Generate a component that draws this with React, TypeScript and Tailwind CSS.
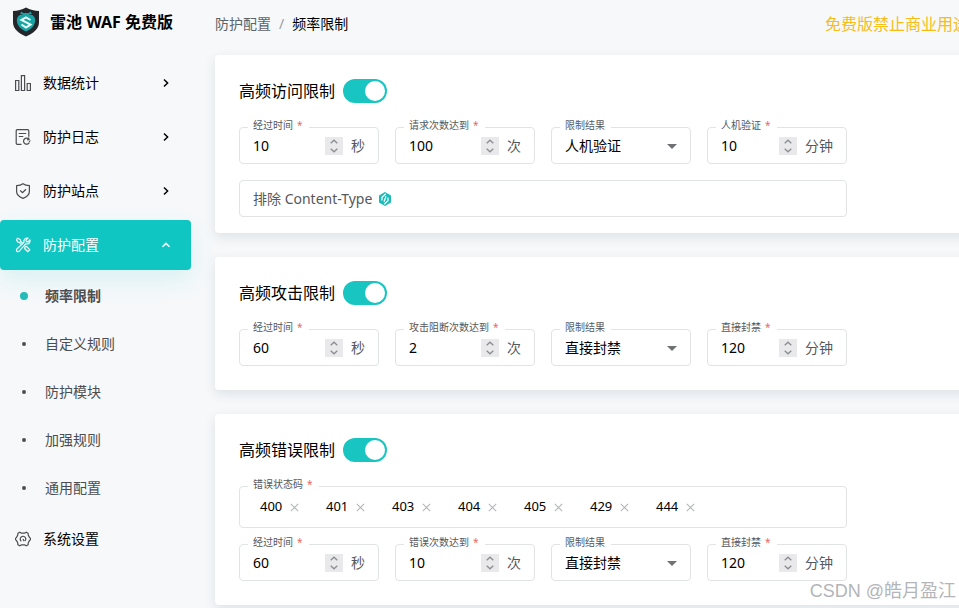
import { useId, type ReactNode } from "react";

function LogoIcon() {
  return (
    <svg width="28" height="30" viewBox="0 0 28 30" aria-hidden="true">
      <path d="M14 .5c4 2.600 8.500 3.200 13 3.500v11.500c0 6.500-6 11-13 14-7-3-13-7.500-13-14V4C5.500 3.700 10 3.100 14 .5z" fill="#23262b" />
      <path d="M14 7c3.500 0 5 .5 7 1.500 2 2 2.500 4 2 6.500-1 5-5 7.500-9 9.500-4-2-8-4.500-9-9.500-.5-2.500 0-4.500 2-6.500 2-1 3.500-1.500 7-1.500z" fill="#1aa3a4" />
      <path d="M8.500 6.500h11M9 5l3 2.500M19 5l-3 2.500" stroke="#1aa3a4" strokeWidth="1.200" />
      <path d="M18.500 13l-4.500-2.500-4.500 2.500 9 4.500-4.500 3-4.500-3" fill="none" stroke="#e9fbfa" strokeWidth="2" />
    </svg>
  );
}

function BarsIcon() {
  return (
    <svg width="16" height="16" viewBox="0 0 16 16" fill="none" stroke="currentColor" strokeWidth="1.200" aria-hidden="true">
      <path d="M.6 5.500h3.200v10H.6zM6.400.6h3.200v14.900H6.400zM12.200 8.500h3.200v7h-3.200z" />
    </svg>
  );
}

function LogIcon() {
  return (
    <svg width="16" height="16" viewBox="0 0 16 16" fill="none" stroke="currentColor" strokeWidth="1.200" aria-hidden="true">
      <path d="M6.500 15.300H2.200a1 1 0 0 1-1-1V1.700a1 1 0 0 1 1-1h10.600a1 1 0 0 1 1 1v6M3.800 4.500h7.400M3.800 7.500h4.500" />
      <path d="M13.800 10.200a3 3 0 1 0 .5 3.200M13.500 8.500l.5 2-2 .3M15.300 11.500l-1.200 1.500" />
    </svg>
  );
}

function ShieldIcon() {
  return (
    <svg width="16" height="16" viewBox="0 0 16 16" fill="none" stroke="currentColor" strokeWidth="1.200" strokeLinejoin="round" aria-hidden="true">
      <path d="M8 .7c1.800 1.300 4 1.800 6.400 1.900v6c0 3.300-3 5.500-6.400 6.800-3.400-1.300-6.400-3.500-6.400-6.800v-6C4 2.500 6.200 2 8 .7z" />
      <path d="M5.200 7.500l2.200 2.200 3.600-3.500" />
    </svg>
  );
}

function ToolsIcon() {
  return (
    <svg width="16" height="16" viewBox="0 0 16 16" fill="none" stroke="currentColor" strokeWidth="1.200" strokeLinejoin="round" aria-hidden="true">
      <path d="M10.800 6.800l-6.600 7.400a1.500 1.500 0 0 1-2.300-2.200L9 5.200c-.6-2.400 1.200-4.600 4-4.100l-2 2.100.3 1.500 1.600.3 2-2c.6 2.700-1.600 4.600-4.100 3.800z" />
      <path d="M1.300 2.700l1.500-1.500 2.600 1.600.3 1.500 2 2M1.300 2.700l1.600 2.400 1.500.3 2 2M9.600 10.400l1-1 1.200.2 3 3.200-1.900 1.900-3.100-3z" />
    </svg>
  );
}

function GearIcon() {
  return (
    <svg width="16" height="16" viewBox="0 0 16 16" fill="none" stroke="currentColor" strokeWidth="1.200" strokeLinejoin="round" aria-hidden="true">
      <path d="M4.700 1.200l1.500.9h3.600l1.500-.9 1.800 1.100.1 1.700 1.400 2.600.9.700v1.400l-.9.700-1.400 2.600-.1 1.700-1.800 1.100-1.500-.9H6.200l-1.500.9-1.800-1.100-.1-1.700-1.400-2.600-.9-.7V7.300l.9-.7 1.400-2.600.1-1.700z" />
      <path d="M6.300 10.300a2.800 2.800 0 1 1 3.800-.4M8 8l1.200 2.200" />
    </svg>
  );
}

function Chevron({ up = false }: { up?: boolean }) {
  return (
    <svg width="10" height="10" viewBox="0 0 10 10" fill="none" stroke="currentColor" strokeWidth="1.500" aria-hidden="true">
      <path d={up ? "M1.500 6.800L5 3.400l3.500 3.400" : "M3 1.500L6.600 5 3 8.500"} />
    </svg>
  );
}

function NavItem({ icon, label, active = false, leaf = false }: { icon: ReactNode; label: string; active?: boolean; leaf?: boolean }) {
  return (
    <button
      type="button"
      className={`my-0.5 flex h-[50px] w-full items-center rounded pr-5 pl-[15px] text-left text-sm ${
        active ? "bg-[#0fc6c2] text-white shadow-[0_10px_24px_rgba(15,198,194,0.12)]" : "text-black"
      }`}
    >
      <span className={active ? "text-white" : "text-[#4b4d50]"}>{icon}</span>
      <span className="ml-3 flex-1">{label}</span>
      {!leaf && <Chevron up={active} />}
    </button>
  );
}

const subItems = ["频率限制", "自定义规则", "防护模块", "加强规则", "通用配置"];

function Sidebar() {
  return (
    <aside className="w-[191px] shrink-0">
      <div className="flex h-14 items-center gap-2.5 pb-3 pl-3">
        <LogoIcon />
        <span className="font-bold">雷池 WAF 免费版</span>
      </div>
      <nav className="flex flex-col">
        <NavItem icon={<BarsIcon />} label="数据统计" />
        <NavItem icon={<LogIcon />} label="防护日志" />
        <NavItem icon={<ShieldIcon />} label="防护站点" />
        <NavItem icon={<ToolsIcon />} label="防护配置" active />
        <ul>
          {subItems.map((item, i) => (
            <li key={item}>
              <a href="#" className={`flex h-12 items-center gap-4 pl-[19px] text-sm text-[#4b4d50] ${i === 0 ? "font-bold" : ""}`}>
                <span className="flex w-2.5 justify-center">
                  <span className={i === 0 ? "size-2 rounded-full bg-[#25bbb8]" : "size-1 rounded-full bg-[#4b4d50]"} />
                </span>
                {item}
              </a>
            </li>
          ))}
        </ul>
        <NavItem icon={<GearIcon />} label="系统设置" leaf />
      </nav>
    </aside>
  );
}

function Card({ title, compact = false, children }: { title: string; compact?: boolean; children: ReactNode }) {
  const id = useId();
  return (
    <section className={`rounded bg-white px-6 pt-6 shadow-[0_4px_12px_rgba(60,70,80,0.12)] ${compact ? "pb-4" : "pb-6"}`}>
      <div className="mb-6 flex h-6 items-center gap-2">
        <label htmlFor={id}>{title}</label>
        <input
          id={id}
          type="checkbox"
          role="switch"
          defaultChecked
          className="flex h-6 w-11 appearance-none items-center justify-end rounded-full bg-[#18c5c1] p-0.5 before:size-5 before:rounded-full before:bg-white"
        />
      </div>
      <div className="flex max-w-[608px] flex-col gap-4">{children}</div>
    </section>
  );
}

function FieldLabel({ id, text, required = false }: { id?: string; text: string; required?: boolean }) {
  return (
    <label htmlFor={id} className="absolute -top-[11px] left-2 bg-white pr-1.5 pl-[5px] text-[10px] leading-4 whitespace-nowrap text-[#55585c]">
      {text}
      {required && <span className="ml-1 text-[#f0665c]">*</span>}
    </label>
  );
}

const boxClass = "relative flex h-[37px] items-center rounded border border-[#e2e3e5]";

function NumberField({ label, value, unit }: { label: string; value: string; unit: string }) {
  const id = useId();
  return (
    <div className={`${boxClass} px-[13px]`}>
      <FieldLabel id={id} text={label} required />
      <input id={id} type="text" inputMode="numeric" defaultValue={value} className="w-0 flex-1 text-sm outline-none" />
      <span className="flex h-[18px] w-[18px] flex-col bg-[#e9e9eb] text-[#8b8d91]">
        <button type="button" aria-label={`${label} +`} className="flex h-[9px] items-center justify-center">
          <svg width="8" height="5" viewBox="0 0 8 5" fill="none" stroke="currentColor" strokeWidth="1.300"><path d="M.7 4.300L4 1.200l3.300 3.100" /></svg>
        </button>
        <button type="button" aria-label={`${label} -`} className="flex h-[9px] items-center justify-center">
          <svg width="8" height="5" viewBox="0 0 8 5" fill="none" stroke="currentColor" strokeWidth="1.300"><path d="M.7.7L4 3.800 7.300.7" /></svg>
        </button>
      </span>
      <span className="ml-2 text-sm text-[#55585c]">{unit}</span>
    </div>
  );
}

function SelectField({ label, value }: { label: string; value: string }) {
  const id = useId();
  return (
    <div className={boxClass}>
      <FieldLabel id={id} text={label} />
      <select id={id} defaultValue={value} className="h-full w-full appearance-none bg-transparent pl-[13px] text-sm outline-none">
        <option>人机验证</option>
        <option>直接封禁</option>
      </select>
      <svg className="pointer-events-none absolute right-1.5" width="24" height="24" viewBox="0 0 24 24" fill="#6f7175" aria-hidden="true">
        <path d="M7 10l5 5 5-5z" />
      </svg>
    </div>
  );
}

type RowProps = { period: string; countLabel: string; count: string; result: string; duration: string };

function LimitRow({ period, countLabel, count, result, duration }: RowProps) {
  return (
    <div className="grid grid-cols-4 gap-4">
      <NumberField label="经过时间" value={period} unit="秒" />
      <NumberField label={countLabel} value={count} unit="次" />
      <SelectField label="限制结果" value={result} />
      <NumberField label={result} value={duration} unit="分钟" />
    </div>
  );
}

function ContentTypeField() {
  const id = useId();
  return (
    <div className={`${boxClass} gap-2 px-[13px]`}>
      <label htmlFor={id} className="flex items-center gap-1.5 text-sm text-[#55585c]">
        排除 Content-Type
        <svg width="14" height="14" viewBox="0 0 14 14" aria-hidden="true">
          <path d="M7 0l6 3.500v7L7 14l-6-3.500v-7z" fill="#18bdb9" />
          <path d="M7.800 1.800L4 5.200v3.300M6.200 12.200L10 8.800V5.500M8 4.300L6 9.700" stroke="#fff" strokeWidth="1.200" fill="none" />
        </svg>
      </label>
      <input id={id} className="min-w-0 flex-1 text-sm outline-none" />
    </div>
  );
}

const codes = ["400", "401", "403", "404", "405", "429", "444"];

function StatusCodes() {
  return (
    <div className="relative flex h-[42px] items-center rounded border border-[#e2e3e5] pl-5">
      <FieldLabel text="错误状态码" required />
      {codes.map((code) => (
        <span key={code} className="flex w-[66px] items-center gap-2 text-[13px]">
          {code}
          <button type="button" aria-label={`删除 ${code}`} className="text-[#b4b6b9]">
            <svg width="9" height="9" viewBox="0 0 9 9" stroke="currentColor" strokeWidth="1.100"><path d="M.8.8l7.400 7.400M8.200.8L.8 8.200" /></svg>
          </button>
        </span>
      ))}
    </div>
  );
}

export default function App() {
  return (
    <div className="relative min-h-screen overflow-hidden bg-[#f6f8fa] font-['Noto_Sans','Noto_Sans_CJK_SC',sans-serif] text-base text-black">
      <div className="flex min-w-[985px] gap-6">
        <Sidebar />
        <main className="min-w-0 flex-1">
          <header className="flex h-[55px] items-center justify-between pr-4 pb-[7px]">
            <nav className="flex gap-2 text-sm">
              <a href="#" className="text-[#606366]">防护配置</a>
              <span className="text-[#9a9da1]">/</span>
              <span>频率限制</span>
            </nav>
            <span className="text-[#f6bd16]">免费版禁止商业用途</span>
          </header>
          <div className="flex flex-col gap-6">
            <Card title="高频访问限制" compact>
              <LimitRow period="10" countLabel="请求次数达到" count="100" result="人机验证" duration="10" />
              <ContentTypeField />
            </Card>
            <Card title="高频攻击限制">
              <LimitRow period="60" countLabel="攻击阻断次数达到" count="2" result="直接封禁" duration="120" />
            </Card>
            <Card title="高频错误限制">
              <StatusCodes />
              <LimitRow period="60" countLabel="错误次数达到" count="10" result="直接封禁" duration="120" />
            </Card>
          </div>
        </main>
      </div>
      <span className="absolute right-[3px] bottom-[3px] font-['Liberation_Sans','Noto_Sans_CJK_SC',sans-serif] text-lg text-[#b3b5b8]">CSDN @皓月盈江</span>
    </div>
  );
}
